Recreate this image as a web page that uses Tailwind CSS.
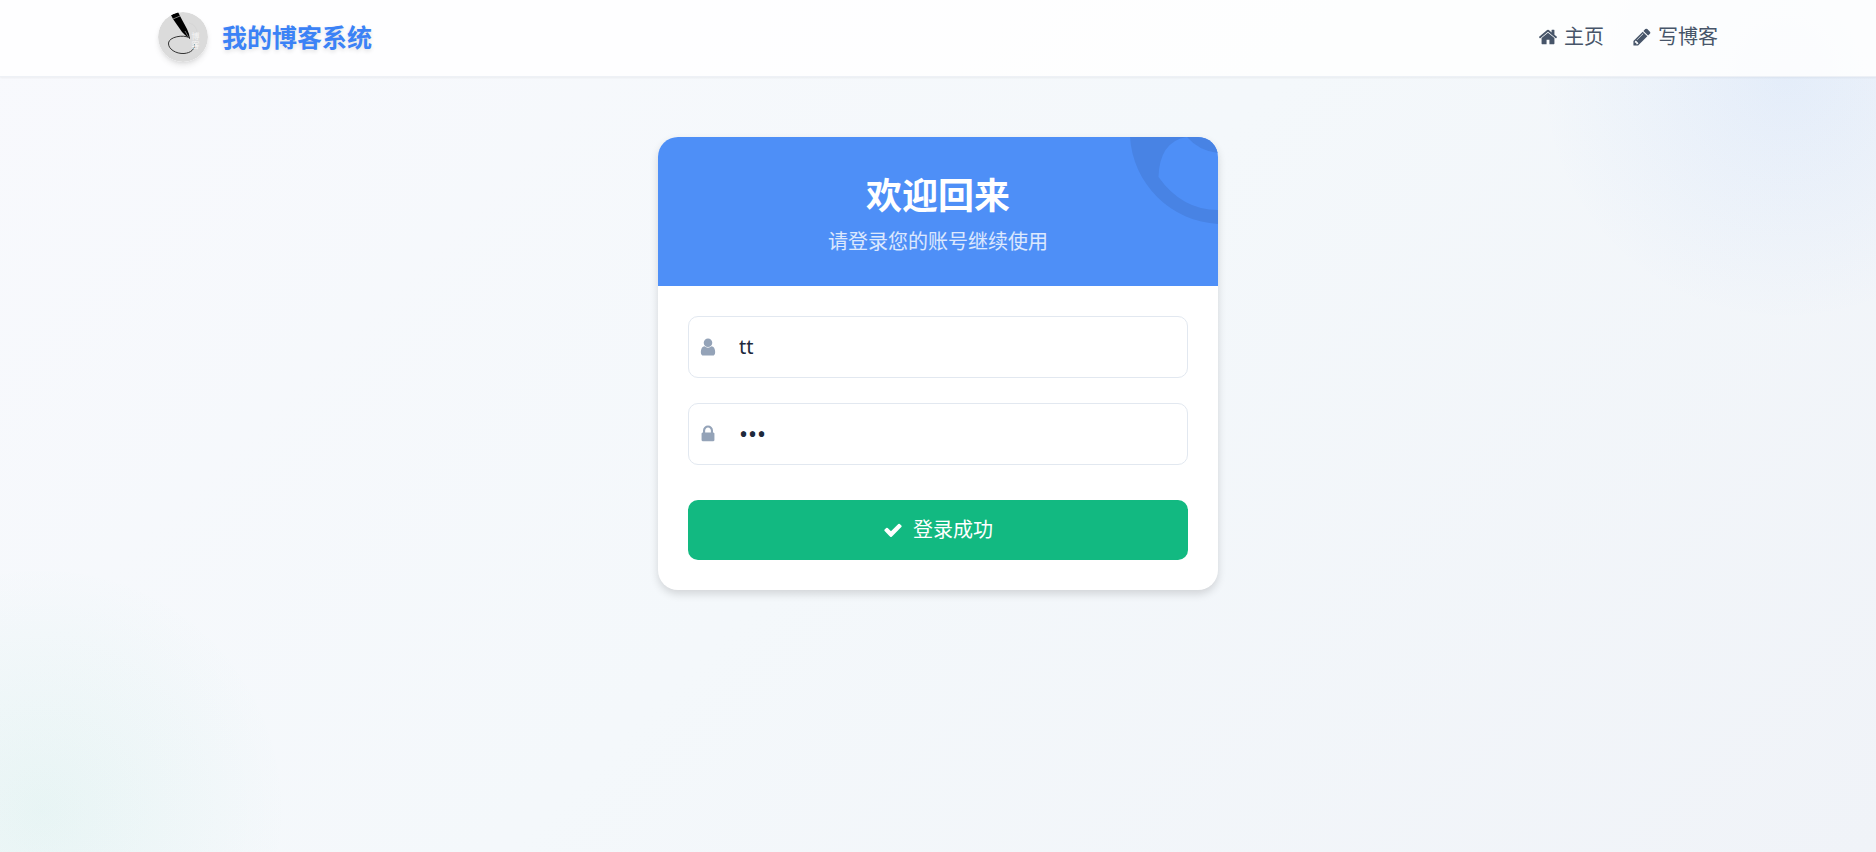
<!DOCTYPE html>
<html lang="zh-CN">
<head>
    <meta charset="UTF-8">
    <meta name="viewport" content="width=device-width, initial-scale=1.0">
    <title>登录 - 我的博客系统</title>
    <script src="https://cdn.jsdelivr.net/npm/@tailwindcss/browser@4"></script>
</head>
<body class="relative min-h-screen overflow-x-hidden bg-linear-135 from-[#f8f9fd] via-[#f4f8fb] to-[#f0f3f8] font-['Noto_Sans','Noto_Sans_CJK_SC',sans-serif] text-xl text-[#1e293b]">
    <!-- Background glow -->
    <div class="pointer-events-none absolute inset-0 overflow-hidden">
        <div class="absolute -top-44 -right-40 size-[500px] rounded-full bg-radial from-[#3b82f6]/8 to-transparent to-70%"></div>
        <div class="absolute -bottom-52 -left-52 size-[500px] rounded-full bg-radial from-[#10b981]/6 to-transparent to-70%"></div>
    </div>

    <!-- Navigation -->
    <nav class="relative border-b border-[#e2e8f0]/60 bg-white/85 shadow-xs">
        <div class="mx-auto flex max-w-[1600px] items-center justify-between px-5 pt-3 pb-[14px]">
            <div class="flex items-center gap-[14px]">
                <svg class="size-[50px] rounded-full shadow-md" viewBox="0 0 50 50" aria-hidden="true">
                    <circle cx="25" cy="25" r="25" fill="#dbdbdb"/>
                    <path d="M32 26C25 22 11 25 10.500 31C10 37 18 42 26 41.500C33 41 37 37 36.500 32" fill="none" stroke="#333" stroke-width="1"/>
                    <path d="M13 3L20 0L22 4L15 7Z" fill="#000"/>
                    <path d="M15 7L22 4L29 17L31 22L32 27L27 23L24 20Z" fill="#000"/>
                    <path d="M15 7L22 4M27 19L31 26" stroke="#999" stroke-width=".7"/>
                    <path d="M31 11Q39 13 39 21" fill="none" stroke="#d2d2d2" stroke-width=".7"/>
                    <text x="33.500" y="27" font-size="8" fill="#f5f5f5">博</text>
                    <text x="33.500" y="36" font-size="8" fill="#f5f5f5">客</text>
                </svg>
                <span class="text-[25px] font-bold text-[#3b82f6] [text-shadow:0_2px_4px_rgba(0,0,0,0.12)]">我的博客系统</span>
            </div>
            <div class="flex gap-7 text-[#475569]">
                <a href="#" class="flex items-center gap-[6px] hover:text-[#3b82f6]">
                    <svg class="size-5" viewBox="0 0 1792 1792" fill="currentColor"><path d="M1472 992v480q0 26-19 45t-45 19h-384v-384h-256v384h-384q-26 0-45-19t-19-45v-480q0-1 .5-3t.5-3l575-474 575 474q1 2 1 6zm223-69l-62 74q-8 9-21 11h-3q-13 0-21-7l-692-577-692 577q-12 8-24 7-13-2-21-11l-62-74q-8-10-7-23.500t11-21.500l719-599q32-26 76-26t76 26l244 204v-195q0-14 9-23t23-9h192q14 0 23 9t9 23v408l219 182q10 8 11 21.500t-7 23.500z"/></svg>
                    主页
                </a>
                <a href="#" class="flex items-center gap-[6px] hover:text-[#3b82f6]">
                    <svg class="size-5" viewBox="0 0 1792 1792" fill="currentColor"><path d="M491 1536l91-91-235-235-91 91v107h128v128h107zm523-928q0-22-22-22-10 0-17 7l-542 542q-7 7-7 17 0 22 22 22 10 0 17-7l542-542q7-7 7-17zm-54-192l416 416-832 832h-416v-416zm683 96q0 53-37 90l-166 166-416-416 166-165q36-38 90-38 53 0 91 38l235 234q37 39 37 91z"/></svg>
                    写博客
                </a>
            </div>
        </div>
    </nav>

    <!-- Login card -->
    <main class="relative px-5 py-[60px]">
        <div class="mx-auto max-w-[560px] overflow-hidden rounded-[20px] bg-white shadow-[0_4px_8px_rgba(0,0,0,0.14)]">
            <div class="relative bg-[#4e8ff7] px-8 pt-8 pb-[30px] text-center text-white">
                <svg class="absolute top-0 right-0 size-[88px]" viewBox="0 0 88 88" fill="#4883e4" aria-hidden="true">
                    <path d="M0 0H57Q43 2 35.500 13Q29 23 28.500 40Q52 73 88 73V87A93 93 0 0 1 0 0Z"/>
                    <path d="M57 0H88V16Q69 14 57 0Z"/>
                </svg>
                <h1 class="text-4xl/[54px] font-bold">欢迎回来</h1>
                <p class="mt-1 text-xl/[29px] text-white/80">请登录您的账号继续使用</p>
            </div>
            <form class="p-[30px]" onsubmit="return false">
                <div class="relative mb-[25px]">
                    <label for="username" class="absolute inset-y-0 left-[10px] flex items-center text-[#94a3b8]" aria-label="用户名">
                        <svg class="size-5" viewBox="0 0 1792 1792" fill="currentColor"><path d="M1536 1399q0 109-62.500 187t-150.500 78h-854q-88 0-150.500-78t-62.500-187q0-85 8.500-160.500t31.500-152 58.500-131 94-89 134.500-34.500q131 128 313 128t313-128q76 0 134.500 34.500t94 89 58.500 131 31.500 152 8.500 160.500zm-256-887q0 159-112.500 271.500t-271.500 112.500-271.500-112.500-112.500-271.500 112.500-271.500 271.500-112.500 271.500 112.500 112.500 271.500z"/></svg>
                    </label>
                    <input type="text" id="username" value="tt" class="block h-[62px] w-full rounded-[10px] border border-[#e2e8f0] bg-white pr-5 pb-[2px] pl-[50px] outline-none focus:border-[#3b82f6]">
                </div>
                <div class="relative mb-[35px]">
                    <label for="password" class="absolute inset-y-0 left-[10px] flex items-center text-[#94a3b8]" aria-label="密码">
                        <svg class="size-5" viewBox="0 0 1792 1792" fill="currentColor"><path d="M640 768h512v-192q0-106-75-181t-181-75-181 75-75 181v192zm832 96v576q0 40-28 68t-68 28h-960q-40 0-68-28t-28-68v-576q0-40 28-68t68-28h32v-192q0-184 132-316t316-132 316 132 132 316v192h32q40 0 68 28t28 68z"/></svg>
                    </label>
                    <input type="password" id="password" value="123" class="block h-[62px] w-full rounded-[10px] border border-[#e2e8f0] bg-white pr-5 pb-[2px] pl-[50px] text-2xl outline-none focus:border-[#3b82f6]">
                </div>
                <button type="submit" class="flex h-[60px] w-full items-center justify-center gap-[10px] rounded-[10px] bg-[#12b981] text-white hover:bg-[#0e9f6e]">
                    <svg class="size-5" viewBox="0 0 1792 1792" fill="currentColor"><path d="M1671 566q0 40-28 68l-724 724-136 136q-28 28-68 28t-68-28l-136-136-362-362q-28-28-28-68t28-68l136-136q28-28 68-28t68 28l294 295 656-657q28-28 68-28t68 28l136 136q28 28 28 68z"/></svg>
                    登录成功
                </button>
            </form>
        </div>
    </main>
</body>
</html>
